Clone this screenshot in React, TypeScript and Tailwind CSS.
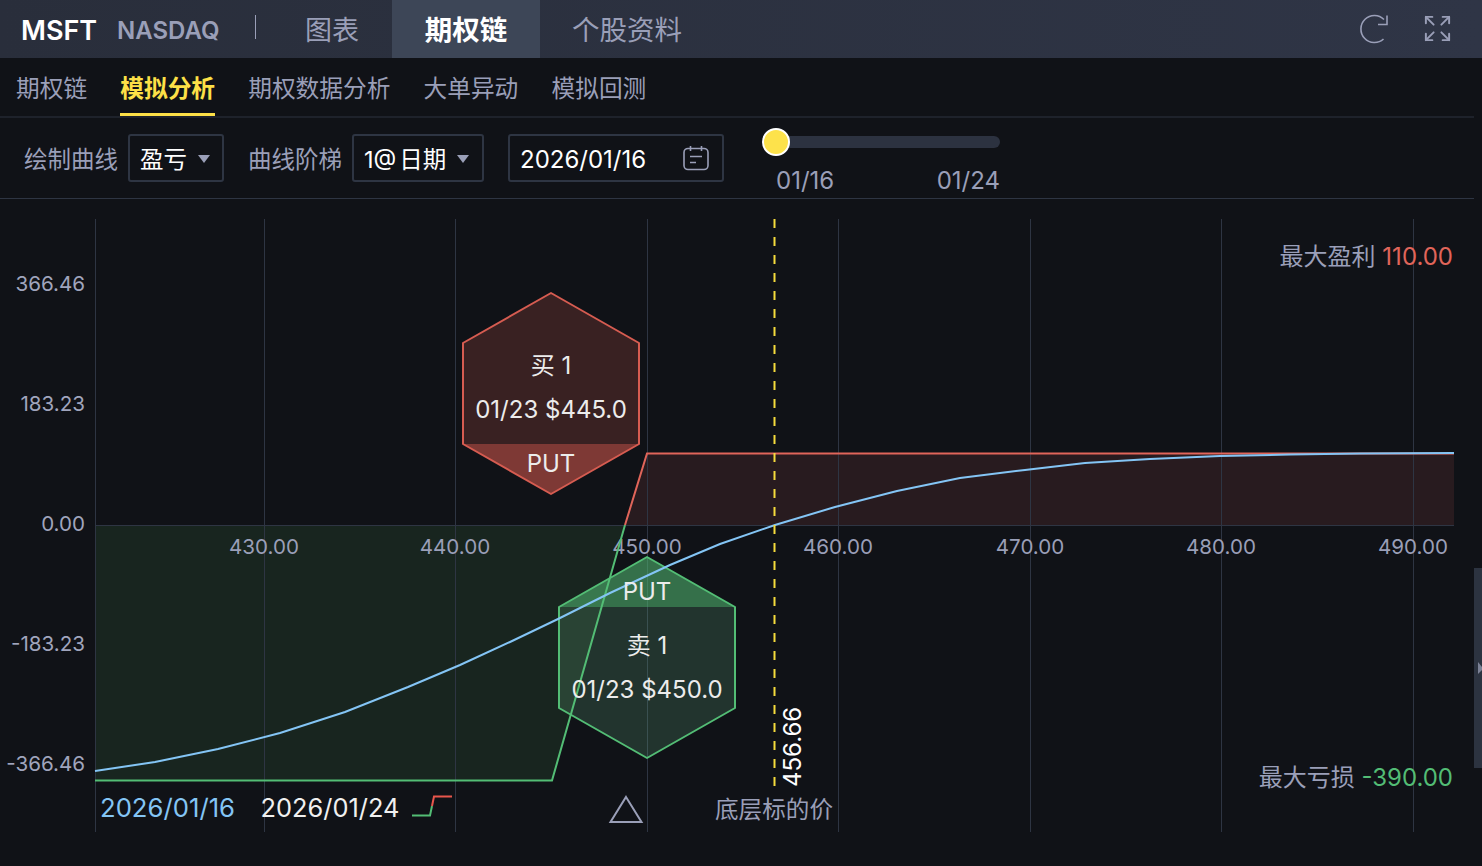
import { Expand } from 'lucide-react'

const subTabs = ['期权链', '模拟分析', '期权数据分析', '大单异动', '模拟回测']
const gridX = [264, 455, 647, 838, 1030, 1221, 1413]
const xLabels = ['430.00', '440.00', '450.00', '460.00', '470.00', '480.00', '490.00']
const yLabels = [
  { y: 284, t: '366.46' },
  { y: 404, t: '183.23' },
  { y: 524, t: '0.00' },
  { y: 644, t: '-183.23' },
  { y: 764, t: '-366.46' },
]

const curve =
  'M95 771 L155 762 L218 749 L280 733 L345 712 L408 687 L460 665 L510 642 L558 619 L610 593 L670 565 L720 544 L775 525 L835 507 L897 491 L960 478 L1025 470 L1085 463 L1150 459 L1220 456 L1290 454.5 L1360 453.5 L1454 453'

function Caret() {
  return (
    <svg width="12" height="8" viewBox="0 0 12 8" className="shrink-0 -translate-y-px">
      <path d="M0 0H12L6 8Z" fill="#9a9fb8" />
    </svg>
  )
}

function RefreshIcon() {
  return (
    <svg width="32" height="32" viewBox="0 0 32 32" fill="none" stroke="#9a9fb8" strokeWidth="1.6">
      <path d="M26 6.5 A13.5 13.5 0 1 0 25.5 26" />
      <path d="M29 2.5 V11.5 H20" />
    </svg>
  )
}

function CalendarIcon() {
  return (
    <svg width="28" height="26" viewBox="0 0 28 26" fill="none" stroke="#9a9fb8" strokeWidth="1.6">
      <rect x="2" y="3.5" width="24" height="21" rx="4" />
      <path d="M8.5 1V6M19.5 1V6M8 11.5H20M8 17.5H14" />
    </svg>
  )
}

function Hexagon({ top, fill, stroke, bandOpacity, band }: { top: boolean; fill: string; stroke: string; bandOpacity: number; band: string }) {
  return (
    <>
      <polygon points={top ? '559,607 647,557 735,607' : '463,444 639,444 551,494'} fill={band} fillOpacity={bandOpacity} />
      <polygon
        points={top ? '559,607 735,607 735,708 647,758 559,708' : '463,343 551,293 639,343 639,444 463,444'}
        fill={fill}
        fillOpacity="0.2"
      />
      <polygon
        points={top ? '647,557 735,607 735,708 647,758 559,708 559,607' : '551,293 639,343 639,444 551,494 463,444 463,343'}
        fill="none"
        stroke={stroke}
        strokeWidth="2"
        strokeLinejoin="round"
      />
    </>
  )
}

export default function App() {
  return (
    <div className="flex h-[866px] w-[1482px] flex-col overflow-hidden bg-[#101217] font-[Inter,'Noto_Sans_CJK_SC',sans-serif]">
      {/* top bar */}
      <div className="flex h-[58px] shrink-0 items-center bg-linear-to-r from-[#292e3b] to-[#2f3546]">
        <span className="ml-[21px] mt-1 w-[96px] text-[27px] font-semibold text-white">MSFT</span>
        <span className="mt-1 w-[138px] text-[24px] font-semibold text-[#9a9fb8]">NASDAQ</span>
        <div className="h-6 w-px -translate-y-[2px] bg-[#9a9fb8]" />
        <div className="ml-[49px] mt-1 w-[87px] text-[27px] text-[#9a9fb8]">图表</div>
        <div className="flex h-full w-[148px] items-center justify-center bg-[#3d4657] pt-1 text-[27.5px] font-semibold text-white">期权链</div>
        <div className="ml-8 mt-1 text-[27.5px] text-[#9a9fb8]">个股资料</div>
        <div className="ml-auto mr-[29px] flex items-center gap-[35px]">
          <div className="translate-x-[3px]">
            <RefreshIcon />
          </div>
          <Expand size={31} strokeWidth={1.5} color="#9a9fb8" className="-translate-y-px" />
        </div>
      </div>

      {/* sub tabs */}
      <div className="mr-2 flex h-[60px] shrink-0 gap-[33.2px] border-b-2 border-[#1e222b] pl-4">
        {subTabs.map((t, i) => (
          <div
            key={t}
            className={
              i === 1
                ? 'flex h-[58px] items-center border-b-[3px] border-[#fde047] pt-[7px] text-[23.7px] font-semibold text-[#fde047]'
                : 'flex h-[58px] items-center border-b-[3px] border-transparent pt-[7px] text-[23.7px] text-[#9a9fb8]'
            }
          >
            {t}
          </div>
        ))}
      </div>

      {/* controls */}
      <div className="mr-2 flex h-[81px] shrink-0 items-start border-b border-[#2e3543] pl-6 pt-4">
        <span className="flex h-12 w-[104px] items-center pt-1 text-[23.5px] text-[#9a9fb8]">绘制曲线</span>
        <div className="flex h-12 w-[96px] items-center gap-[11px] rounded-[3px] border-2 border-[#2e3543] pl-[10px] pt-1 text-[23.5px] text-white">
          盈亏
          <Caret />
        </div>
        <span className="ml-6 flex h-12 w-[104px] items-center pt-1 text-[23.5px] text-[#9a9fb8]">曲线阶梯</span>
        <div className="flex h-12 w-[132px] items-center gap-[11px] rounded-[3px] border-2 border-[#2e3543] pl-[10px] pt-1 text-[23.5px] text-white">
          <span className="flex gap-[3px]">
            <span>1@</span>
            <span>日期</span>
          </span>
          <Caret />
        </div>
        <div className="ml-6 flex h-12 w-[216px] items-center justify-between rounded-[3px] border-2 border-[#2e3543] pl-[10px] pr-3 text-[24px] text-white">
          <span className="mt-1">2026/01/16</span>
          <CalendarIcon />
        </div>
        <div className="ml-[52px] w-[224px]">
          <div className="relative mt-[2px] h-3 rounded-md bg-[#2c3240]">
            <div className="absolute -left-[14px] -top-2 size-7 rounded-full border-2 border-white bg-[#fde24b]" />
          </div>
          <div className="mt-[17px] flex justify-between text-[24px] leading-8 text-[#9a9fb8]">
            <span>01/16</span>
            <span>01/24</span>
          </div>
        </div>
      </div>

      {/* chart */}
      <div className="relative flex-1">
        <svg width="1482" height="667" viewBox="0 199 1482 667" className="block">
          <path d="M95 525H625L552 780H95Z" fill="#18251f" />
          <path d="M647 453H1454V525H625Z" fill="#281b1f" />
          <line x1="95" x2="1454" y1="525.5" y2="525.5" stroke="#2e3543" />
          <line x1="95.5" x2="95.5" y1="219" y2="832" stroke="#2e3543" />
          {gridX.map((x) => (
            <line key={x} x1={x + 0.5} x2={x + 0.5} y1="219" y2="832" stroke="#2e3543" />
          ))}
          {xLabels.map((t, i) => (
            <text key={t} x={gridX[i]} y="554" textAnchor="middle" className="fill-[#9a9fb8] text-[20.6px]">
              {t}
            </text>
          ))}
          {yLabels.map((l) => (
            <text key={l.t} x="85" y={l.y + 7} textAnchor="end" className="fill-[#a0a5bd] text-[20.6px]">
              {l.t}
            </text>
          ))}

          <Hexagon top={false} fill="#e05d52" stroke="#d65c51" band="#e05d52" bandOpacity={0.53} />
          <Hexagon top fill="#6cbf8a" stroke="#53bd75" band="#53bd75" bandOpacity={0.55} />

          <path d="M95 780.5H552L625 525" fill="none" stroke="#53bd75" strokeWidth="2" />
          <path d="M625 525L647 453.5H1454" fill="none" stroke="#e0655a" strokeWidth="2" />
          <path d={curve} fill="none" stroke="#84c5f5" strokeWidth="2" />
          <line x1="774.5" x2="774.5" y1="219" y2="786" stroke="#f5dc3c" strokeWidth="2" strokeDasharray="9 9" />

          <text x="551" y="374" textAnchor="middle" className="fill-[#ececec] text-[24px]">买 1</text>
          <text x="551" y="418" textAnchor="middle" className="fill-[#ececec] text-[24px]">01/23 $445.0</text>
          <text x="551" y="472" textAnchor="middle" className="fill-[#ececec] text-[24px]">PUT</text>
          <text x="647" y="600" textAnchor="middle" className="fill-[#ececec] text-[24px]">PUT</text>
          <text x="647" y="654" textAnchor="middle" className="fill-[#ececec] text-[24px]">卖 1</text>
          <text x="647" y="698" textAnchor="middle" className="fill-[#ececec] text-[24px]">01/23 $450.0</text>

          <text transform="translate(801 787) rotate(-90)" className="fill-white text-[24px]">456.66</text>

          <text x="1453" y="265" textAnchor="end" className="text-[24px]">
            <tspan className="fill-[#9a9fb8]">最大盈利 </tspan>
            <tspan className="fill-[#e0655a]">110.00</tspan>
          </text>
          <text x="1453" y="786" textAnchor="end" className="text-[24px]">
            <tspan className="fill-[#9a9fb8]">最大亏损 </tspan>
            <tspan className="fill-[#53bd75]">-390.00</tspan>
          </text>

          <text x="100" y="817" className="fill-[#84c5f5] text-[25.7px]">2026/01/16</text>
          <text x="260.5" y="817" className="fill-[#f0f0f0] text-[25.4px]">2026/01/24</text>
          <path d="M412 815.5H430L432 806" fill="none" stroke="#53bd75" strokeWidth="2" />
          <path d="M432 806L434 796.5H452" fill="none" stroke="#e8564c" strokeWidth="2" />

          <polygon points="626,797 641.5,822 610.5,822" fill="none" stroke="#9a9fb8" strokeWidth="2" />
          <text x="774" y="818" textAnchor="middle" className="fill-[#9a9fb8] text-[23.6px]">底层标的价</text>

          <rect x="1474" y="568" width="8" height="200" fill="#2c3340" />
          <path d="M1478 662L1482 667V670L1478 674Z" fill="#7c8296" />
        </svg>
      </div>
    </div>
  )
}
